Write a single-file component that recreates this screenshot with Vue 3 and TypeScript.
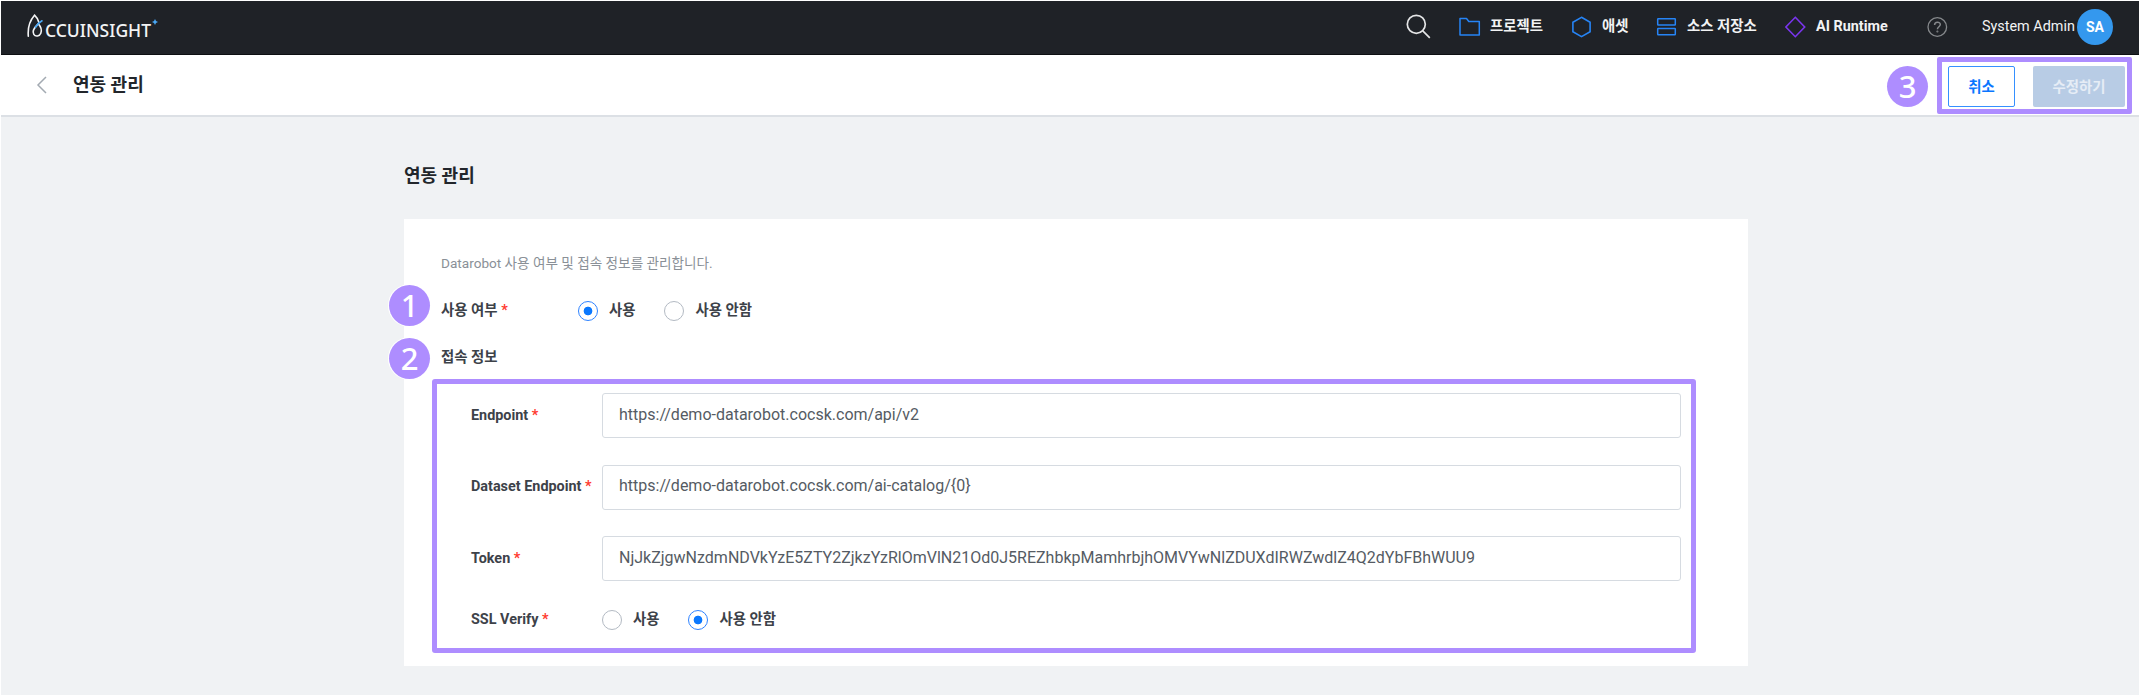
<script setup lang="ts">
import { ref } from 'vue'

interface Field { label: string; value: string }

const fields = ref<Field[]>([
  { label: 'Endpoint', value: 'https://demo-datarobot.cocsk.com/api/v2' },
  { label: 'Dataset Endpoint', value: 'https://demo-datarobot.cocsk.com/ai-catalog/{0}' },
  { label: 'Token', value: 'NjJkZjgwNzdmNDVkYzE5ZTY2ZjkzYzRlOmVlN21Od0J5REZhbkpMamhrbjhOMVYwNlZDUXdIRWZwdlZ4Q2dYbFBhWUU9' },
])
const enabled = ref<boolean>(true)
const sslVerify = ref<boolean>(false)
</script>

<template>
  <div class="page">
    <header class="topbar">
      <div class="logo">
        <svg class="drop" width="17" height="26" viewBox="0 0 17 26" fill="none" stroke-linecap="round">
          <path d="M1.3 23.2C.6 15 3.3 7 7.5 2.2c2.2 2 3.5 4.3 4.3 7" stroke="#f4f5f6" stroke-width="1.6" />
          <path d="M11.3 10.8c2.7 3 3.7 6.300 2.500 9.500-1.200 3.100-5.400 3.600-7 1-1.600-2.700.9-7.200 4.500-10.500" stroke="#f4f5f6" stroke-width="1.6" />
          <path d="M8.500 14.200C10.300 11.500 12.400 9.300 15 7.800" stroke="#4aa8f5" stroke-width="1.700" />
        </svg>
        <span class="wordmark">CCUINSIGHT</span>
        <svg class="spark" width="6" height="6" viewBox="0 0 6 6"><path d="M3 0 4 2 6 3 4 4 3 6 2 4 0 3 2 2Z" fill="#4aa8f5" /></svg>
      </div>
      <nav class="menu">
        <svg width="26" height="26" viewBox="0 0 26 26" fill="none" stroke="#e4e5e6" stroke-width="1.7">
          <circle cx="10.300" cy="10.300" r="9" /><path d="m16.800 16.800 7 7" />
        </svg>
        <a class="item">
          <svg width="22" height="22" viewBox="0 0 22 22" fill="none" stroke="#2684f5" stroke-width="1.5" stroke-linejoin="round"><path d="M1 2.500h6.500l2.300 3H20.300V19H1Z" /></svg>
          <span>프로젝트</span>
        </a>
        <a class="item">
          <svg width="22" height="22" viewBox="0 0 22 22" fill="none" stroke="#2684f5" stroke-width="1.6"><path d="m10.500 1.300 8.600 4.900v9.600l-8.600 4.900-8.600-4.900V6.200Z" /></svg>
          <span>애셋</span>
        </a>
        <a class="item">
          <svg width="22" height="22" viewBox="0 0 22 22" fill="none" stroke="#2684f5" stroke-width="1.500"><rect x="1.700" y="2.700" width="17.600" height="6.300" rx=".5" /><rect x="1.700" y="12.500" width="17.600" height="6.300" rx=".5" /></svg>
          <span>소스 저장소</span>
        </a>
        <a class="item latin">
          <svg width="22" height="22" viewBox="0 0 22 22" fill="none" stroke="#7a35ee" stroke-width="1.600"><path d="m10.300 1.300 9.400 9.700-9.400 9.700L.9 11Z" /></svg>
          <span>AI Runtime</span>
        </a>
        <svg width="22" height="22" viewBox="0 0 22 22" fill="none" stroke="#85888b" stroke-width="1.300">
          <circle cx="10.300" cy="11" r="9.300" />
          <path d="M7.600 9c0-3.800 5.700-3.700 5.700-.4 0 2-2.900 2.300-2.900 4.600" stroke-width="1.500" /><circle cx="10.400" cy="15.500" r=".4" />
        </svg>
        <div class="user"><span>System Admin</span><i class="avatar">SA</i></div>
      </nav>
    </header>

    <section class="titlebar">
      <svg class="back" width="12" height="18" viewBox="0 0 12 18" fill="none" stroke="#a3aab2" stroke-width="1.500"><path d="M10 1 2 9l8 8" /></svg>
      <h1>연동 관리</h1>
      <span class="badge">3</span>
      <div class="actions">
        <button class="cancel">취소</button>
        <button class="submit" disabled>수정하기</button>
      </div>
    </section>

    <main class="content">
      <h2>연동 관리</h2>
      <div class="card">
        <span class="badge one">1</span>
        <span class="badge two">2</span>
        <p class="description">Datarobot 사용 여부 및 접속 정보를 관리합니다.</p>
        <div class="usage">
          <span class="label">사용 여부 <em>*</em></span>
          <label class="choice" @click="enabled = true"><i :class="['radio', { on: enabled }]"></i>사용</label>
          <label class="choice" @click="enabled = false"><i :class="['radio', { on: !enabled }]"></i>사용 안함</label>
        </div>
        <div class="subtitle">접속 정보</div>
        <div class="connection">
          <div v-for="f in fields" :key="f.label" class="field">
            <span class="label">{{ f.label }} <em>*</em></span>
            <input v-model="f.value" type="text" spellcheck="false" />
          </div>
          <div class="ssl">
            <span class="label">SSL Verify <em>*</em></span>
            <label class="choice" @click="sslVerify = true"><i :class="['radio', { on: sslVerify }]"></i>사용</label>
            <label class="choice" @click="sslVerify = false"><i :class="['radio', { on: !sslVerify }]"></i>사용 안함</label>
          </div>
        </div>
      </div>
    </main>
  </div>
</template>

<style>
body { background: #fff; }
</style>

<style scoped>
* { box-sizing: border-box; }
.page {
  width: 2138px; height: 694px; margin: 1px 0 0 1px; display: flex; flex-direction: column;
  background: #f0f2f4; color: #3d4249; white-space: nowrap;
  font: 14.4px/20px Roboto, "Noto Sans CJK KR", sans-serif;
}
.topbar {
  height: 54px; flex: none; display: flex; justify-content: space-between;
  padding: 0 26px 0 26px; background: #1f2227; border-bottom: 1px solid #0d0f12; color: #f2f3f4;
}
.logo { display: flex; padding-top: 12px; }
.drop { flex: none; }
.wordmark { font: 500 17.500px/24px "Noto Sans", sans-serif; margin: 5px 0 0 1px; letter-spacing: 0; }
.spark { margin: 6px 0 0 1px; }
.menu { display: grid; grid-template-columns: 53px 112px 85px 129px 142px 55px 131px; align-items: center; height: 52px; }
.item { display: flex; align-items: center; gap: 9px; font-weight: 700; }
.item span { position: relative; }
.user { display: flex; align-items: center; justify-content: space-between; }
.avatar {
  width: 36px; height: 36px; border-radius: 50%; background: #3498ee; color: #fff;
  font: 700 14px/36px Roboto, sans-serif; text-align: center;
}
.titlebar {
  height: 62px; flex: none; display: flex; align-items: center; background: #fff;
  border-bottom: 2px solid #dce0e5; padding: 0 7px 0 35px;
}
.back { flex: none; }
h1, h2 { margin: 0; font-size: 18px; font-weight: 700; line-height: 26px; color: #22262b; }
h1 { margin-left: 25px; }
.badge {
  width: 41px; height: 41px; border-radius: 50%; background: #ae8dff; color: #fff;
  font: 500 31px/41px "Noto Sans", sans-serif; text-align: center;
}
.titlebar .badge { margin: 3px 9px 0 auto; }
.actions {
  height: 57px; width: 195px; display: flex; gap: 18px; padding: 4px 2px 0 6px;
  border: 5px solid #ae8dff; border-radius: 2px;
}
button { height: 41px; padding: 0; border-radius: 2px; font: 700 14.4px/38px "Noto Sans CJK KR", sans-serif; }
.cancel { width: 67px; border: 1px solid #3590ff; background: #fff; color: #0a76ff; }
.submit { width: 92px; border: 0; background: #b8cce5; color: #e6edf6; }
.content { padding: 46px 0 0 403px; }
h2 { height: 56px; }
.card { position: relative; width: 1344px; height: 447px; background: #fff; padding: 34px 52px 0 28px; }
.card .badge { position: absolute; left: -15px; box-shadow: 0 0 0 1px #fff; }
.one { top: 66px; }
.two { top: 119px; }
.description { margin: 0 0 0 9px; font-size: 13.600px; color: #8a9097; }
.usage { display: flex; align-items: center; margin: 26px 0 0 9px; font-weight: 700; height: 24px; }
.usage .label { width: 137px; }
em { color: #ff3b30; font-style: normal; }
.choice { display: flex; align-items: center; gap: 11px; }
.choice + .choice { margin-left: 29px; }
.radio { width: 20px; height: 20px; border: 1.500px solid #b3bac3; border-radius: 50%; background: #fff; }
.radio.on { border-color: #2f83ff; background: radial-gradient(circle, #0a78ff 4px, #fff 4.700px); }
.subtitle { margin: 25px 0 0 9px; font-weight: 700; }
.connection { width: 1264px; height: 274px; margin-top: 11px; border: 5px solid #ae8dff; border-radius: 3px; padding: 9px 10px 0 34px; }
.field { display: flex; align-items: center; height: 45px; margin-bottom: 26.500px; }
.field .label, .ssl .label { width: 131px; font-weight: 700; }
input {
  width: 1079px; height: 45px; border: 1.500px solid #d6dbe1; border-radius: 3px; outline: 0;
  padding: 0 0 3px 16px; font: 16px Roboto, sans-serif; color: #555b63;
}
.ssl { display: flex; align-items: center; height: 24px; margin-top: 1px; font-weight: 700; }
</style>
